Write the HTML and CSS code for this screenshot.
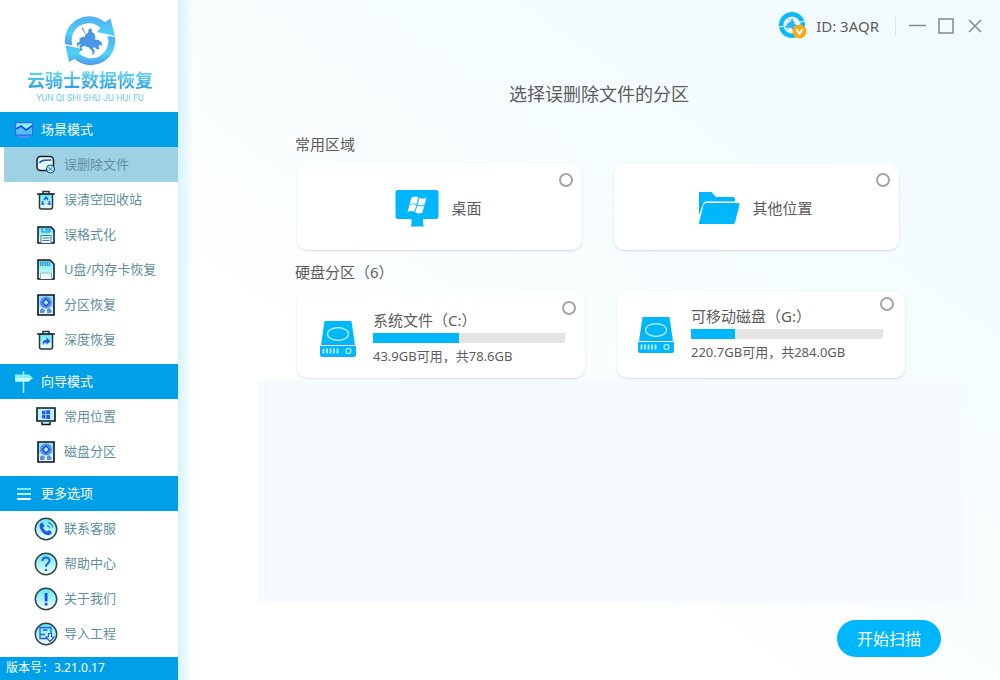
FILE: index.html
```html
<!DOCTYPE html>
<html lang="zh-CN">
<head>
<meta charset="utf-8">
<title>云骑士数据恢复</title>
<link rel="stylesheet" href="styles.css">
</head>
<body>
<svg class="defs" width="0" height="0" aria-hidden="true">
  <defs>
    <linearGradient id="aqua" x1="0" y1="0" x2="0" y2="1"><stop offset="0" stop-color="#5ee9ee"/><stop offset="1" stop-color="#f4feff"/></linearGradient>
    <linearGradient id="ring" x1="0" y1="0" x2="0" y2="1"><stop offset="0" stop-color="#54aef0"/><stop offset=".6" stop-color="#4ed0f3"/><stop offset="1" stop-color="#5098ee"/></linearGradient>
    <symbol id="platter" viewBox="0 0 18 22">
      <path d="M1 1h16v20H1z" fill="#8be6f3" stroke="#10131c" stroke-width="1.6"/>
      <path d="M2 13h14v7H2z" fill="#d6f6fb"/>
      <circle cx="9" cy="8.500" r="6" fill="#5a8fe6"/>
      <path d="M9 5l3.500 3.500L9 12 5.500 8.500z" fill="#9ff1f7" stroke="#1f46d8" stroke-width="1.300"/>
      <path d="M3 19v-3l2-2 3 2-1 3zM10 19v-4l3-1 2 4-2 1z" fill="#5f8be0"/>
    </symbol>
    <symbol id="drive" viewBox="0 0 38 38">
      <path d="M5.500 1h27l3.500 24H2z" fill="#00b7fd"/>
      <path d="M1 26h36v9q0 2-2 2H3q-2 0-2-2z" fill="#00b7fd"/>
      <ellipse cx="19" cy="14" rx="10.500" ry="6.300" fill="none" stroke="#c9f2fc" stroke-width="1.200"/>
      <path d="M4.500 28.500v5M8 28.500v5M11.500 28.500v5M15 28.500v5M18.500 28.500v5" stroke="#b6edfd" stroke-width="1.800"/>
      <circle cx="29.500" cy="31" r="2.500" fill="none" stroke="#c9f2fc" stroke-width="1.200"/>
    </symbol>
    <symbol id="rider" viewBox="0 0 26 28">
      <path d="M4.500 1l1.300-.6 3.200 6.800 2.300-1.700.2-3 1.800-1.300 1.700 1.300-.3 2.300 2.300 1.700 1.500 3.500-.8 2.500 4 .5 3.300 3-.5 3.500-1.500-2-1.500 1.800 1 2.700-2.500.5-1.500-2-3 .3 2.500 3.200-1.500 3.500h-1.300l.3-3.200-4-4-4.200-1.200-3 1.200 1.200 3-1.500.6-1.700-4.300 2.200-2.300-3 .5-.8 2.200-2-.6.7-3 3.200-1.600-.2-2.500 2.500-2.300 3-.3.5-2.500z"/>
    </symbol>
  </defs>
</svg>
<div class="app">
  <aside class="sidebar">
    <div class="brand">
      <svg class="brand-mark" width="52" height="50" viewBox="0 0 52 50" aria-hidden="true">
        <path d="M1 28A24.500 24.500 0 0 1 41 6l5.500-3.500L51 20 33 16l3.500-4A17 17 0 0 0 8.500 29.500z" fill="url(#ring)"/>
        <path d="M51 21A24.500 24.500 0 0 1 10.500 43L5 46 1.500 29.500 18.500 33l-3.500 4A17 17 0 0 0 43.500 20z" fill="url(#ring)"/>
        <use href="#rider" x="13" y="11" width="26" height="28" fill="#4897e5"/>
      </svg>
      <div class="brand-name">云骑士数据恢复</div>
      <div class="brand-latin">YUN QI SHI SHU JU HUI FU</div>
    </div>
    <nav class="menu">
      <section class="group">
        <h2 class="group-title">
          <svg width="20" height="18" viewBox="0 0 20 18" aria-hidden="true"><path d="M1.500 1.500h17v12.500h-17z" fill="#8eeef5" stroke="#2f70e8" stroke-width="1.500"/><path d="M2 8l5-3 5 4 6-4v8H2z" fill="#55bdf3"/><path d="M2 8l5-3 5 4 6-4" fill="none" stroke="#1552cc" stroke-width="1.700"/><path d="M5 16h10" stroke="#5d8cf2" stroke-width="2"/></svg>
          <span>场景模式</span>
        </h2>
        <a class="item active" href="#deleted"><span class="icon"><svg width="20" height="19" viewBox="0 0 20 19" aria-hidden="true"><rect x="1" y="1.500" width="16.500" height="14" rx="3.500" fill="#e3fbfd" stroke="#151b22" stroke-width="1.500"/><path d="M3.500 8c2-3 5-3 12-3" fill="none" stroke="#1f55cf" stroke-width="1.700"/><circle cx="14.500" cy="14" r="4" fill="#a8f1f8" stroke="#173d63"/><path d="M12.800 12.300l3.400 3.400m0-3.400l-3.400 3.400" stroke="#2a62d8"/></svg></span><span>误删除文件</span></a>
        <a class="item" href="#recycle"><span class="icon"><svg width="18" height="20" viewBox="0 0 18 20" aria-hidden="true"><path d="M2.500 4h13v13q0 2-2 2h-9q-2 0-2-2z" fill="url(#aqua)" stroke="#28353d" stroke-width="1.500"/><path d="M0 4h18M6 3.500V1.500h6v2" fill="none" stroke="#28353d" stroke-width="1.500"/><path d="M7 10l2-3 2 3M12 11l1 3h-2.500M7.500 14H5l1-3" fill="none" stroke="#245bea" stroke-width="1.500"/></svg></span><span>误清空回收站</span></a>
        <a class="item" href="#format"><span class="icon"><svg width="18" height="18" viewBox="0 0 18 18" aria-hidden="true"><path d="M1 1h13l3 3v13H1z" fill="url(#aqua)" stroke="#101417" stroke-width="1.500"/><path d="M5 1v5h8V1M9 1v4M11 1v4" fill="none" stroke="#2e7bd1"/><path d="M4 17V9.500h10V17" fill="#e8fbfd" stroke="#3c7f91"/><path d="M5.500 12h7M5.500 14.500h7" stroke="#397dc4"/></svg></span><span>误格式化</span></a>
        <a class="item" href="#usb"><span class="icon"><svg width="18" height="21" viewBox="0 0 18 21" aria-hidden="true"><path d="M1 1h12l4 4v15H1z" fill="url(#aqua)" stroke="#101417" stroke-width="1.500"/><path d="M3.500 3h2v3.500h-2zM7 3h2v3.500H7zM10.500 3h2v3.500h-2z" fill="none" stroke="#388fd8"/><path d="M3.500 20v-6h11v6" fill="#f0fdfd" stroke="#86bdc4"/></svg></span><span>U盘/内存卡恢复</span></a>
        <a class="item" href="#partition"><span class="icon"><svg width="18" height="22" aria-hidden="true"><use href="#platter"/></svg></span><span>分区恢复</span></a>
        <a class="item" href="#deep"><span class="icon"><svg width="18" height="20" viewBox="0 0 18 20" aria-hidden="true"><path d="M2.500 4h13v13q0 2-2 2h-9q-2 0-2-2z" fill="url(#aqua)" stroke="#28353d" stroke-width="1.500"/><path d="M0 4h18M6 3.500V1.500h6v2" fill="none" stroke="#28353d" stroke-width="1.500"/><path d="M6 15c-1-4 1-5 3.500-5V7.500l4 3.700-4 3.300V12.500c-2 0-2.500.5-3.500 2.500z" fill="#2456ee"/></svg></span><span>深度恢复</span></a>
      </section>
      <section class="group">
        <h2 class="group-title">
          <svg width="20" height="22" viewBox="0 0 20 22" aria-hidden="true"><path d="M9.500 0v22" stroke="#a7f5f5" stroke-width="1.500"/><path d="M1 3.500h14l4 3.500-4 3.500H1z" fill="#86f0f2"/><path d="M1 7h17l-3 3.500H1z" fill="#c8fbfa"/></svg>
          <span>向导模式</span>
        </h2>
        <a class="item" href="#common"><span class="icon"><svg width="20" height="19" viewBox="0 0 20 19" aria-hidden="true"><path d="M1 1h18v13H1z" fill="#b8f4f8" stroke="#101723" stroke-width="1.600"/><path d="M6 4l3.500-.5v3.800H6zM10.300 3.400L14 3v4.300h-3.700zM6 8h3.500v3.700L6 11.200zM10.300 8H14v4.200l-3.700-.4z" fill="#2856ef"/><path d="M6 15v2.500h8V15" fill="#b8f4f8" stroke="#101723" stroke-width="1.500"/></svg></span><span>常用位置</span></a>
        <a class="item" href="#disk"><span class="icon"><svg width="18" height="22" aria-hidden="true"><use href="#platter"/></svg></span><span>磁盘分区</span></a>
      </section>
      <section class="group">
        <h2 class="group-title">
          <svg width="20" height="14" viewBox="0 0 20 14" aria-hidden="true"><path d="M3 2h14" stroke="#76e9fb" stroke-width="2"/><path d="M3 7h14" stroke="#b5f4fc" stroke-width="2"/><path d="M3 12h14" stroke="#e8fdff" stroke-width="2"/></svg>
          <span>更多选项</span>
        </h2>
        <a class="item" href="#support"><span class="icon"><svg width="24" height="24" viewBox="0 0 24 24" aria-hidden="true"><circle cx="12" cy="12" r="10.700" fill="url(#aqua)" stroke="#34434b" stroke-width="1.500"/><path d="M8 5.500l2.500 3-1.500 2c1 2 2 3 4 4l2-1.500 3 2.500c-1 2-2.500 3-5 2.500C9 17 6 13 5.500 9c0-2 1-3 2.500-3.500z" fill="#2458e6"/><path d="M13 8.500q2.500.5 3 3M14 5.500q4 1 4.800 5" fill="none" stroke="#3f8ed6" stroke-width="1.300"/></svg></span><span>联系客服</span></a>
        <a class="item" href="#help"><span class="icon"><svg width="24" height="24" viewBox="0 0 24 24" aria-hidden="true"><circle cx="12" cy="12" r="10.700" fill="url(#aqua)" stroke="#34434b" stroke-width="1.500"/><path d="M8.500 9c0-4.500 7-4.500 7-.5 0 2.800-3.500 2.800-3.500 6.200" fill="none" stroke="#2458e6" stroke-width="1.900"/><path d="M11 17h2v2h-2z" fill="#2458e6"/></svg></span><span>帮助中心</span></a>
        <a class="item" href="#about"><span class="icon"><svg width="24" height="24" viewBox="0 0 24 24" aria-hidden="true"><circle cx="12" cy="12" r="10.700" fill="url(#aqua)" stroke="#34434b" stroke-width="1.500"/><path d="M10.700 6h2.800v8.500h-2.800zM10.700 16h2.800v2.500h-2.800z" fill="#1c4aec"/></svg></span><span>关于我们</span></a>
        <a class="item" href="#import"><span class="icon"><svg width="24" height="24" viewBox="0 0 24 24" aria-hidden="true"><circle cx="12" cy="12" r="10.700" fill="url(#aqua)" stroke="#34434b" stroke-width="1.500"/><path d="M13 16.500H6v-11h11V11M9 8h4.500M6 12.500h5" fill="none" stroke="#275de4" stroke-width="1.300"/><path d="M14.500 11.500h3v3.500H20l-4 4.500-4-4.500h2.500z" fill="#e8fdfd" stroke="#275de4" stroke-width="1.200"/></svg></span><span>导入工程</span></a>
      </section>
    </nav>
    <footer class="version">版本号：3.21.0.17</footer>
  </aside>

  <main class="main">
    <header class="topbar">
      <div class="account">
        <svg width="30" height="30" viewBox="0 0 30 30" aria-hidden="true"><circle cx="14" cy="14" r="10.800" fill="#ecfbff" stroke="#0cb9f7" stroke-width="4.500"/><path d="M1 16l9-1M18 12l9-2" stroke="#eefcff" stroke-width="1.200"/><use href="#rider" x="7" y="7" width="14" height="14" fill="#2cb5f0"/><circle cx="21.500" cy="20.500" r="7" fill="#f9aa18"/><path d="M18.500 18l3 5 3-5" fill="none" stroke="#fff" stroke-width="1.900"/></svg>
        <span>ID: 3AQR</span>
      </div>
      <div class="window-buttons">
        <button type="button" aria-label="最小化"><svg width="18" height="18" viewBox="0 0 18 18"><path d="M1 8.500h17"/></svg></button>
        <button type="button" aria-label="最大化"><svg width="18" height="18" viewBox="0 0 18 18"><path d="M2 2h14v14H2z"/></svg></button>
        <button type="button" aria-label="关闭"><svg width="18" height="18" viewBox="0 0 18 18"><path d="M3 3l12 12M15 3L3 15"/></svg></button>
      </div>
    </header>

    <div class="content">
      <h1 class="title">选择误删除文件的分区</h1>
      <h2 class="label">常用区域</h2>
      <div class="places">
        <label class="card place">
          <svg width="44" height="38" viewBox="0 0 44 38" aria-hidden="true"><path d="M3 1h38q2.500 0 2.500 2.500V27q0 3-2.500 3H28v5.500l1 2H15.500l1-2V30H3q-2.500 0-2.500-3V3.500Q.5 1 3 1z" fill="#00b7fd"/><path d="M16.500 8.500q4-2 7-.2l-2 7q-3.500-1.500-7 .3zM24.500 9q3.500 1.500 7-.2l-2 7q-3.500 1.500-7 0zM14.300 16.200q3.500-1.800 7 0l-1.800 6.600q-3.500-1.600-7 .2zM22.300 16.800q3.500 1.500 7 0l-2 6.900q-3.500 1.500-7-.2z" fill="#fff"/></svg>
          <span>桌面</span>
          <input class="pick" type="radio" name="target">
        </label>
        <label class="card place">
          <svg width="42" height="34" viewBox="0 0 42 34" aria-hidden="true"><path d="M1 1h12.500l4.500 5H35q2 0 2 2v2.500H8q-2 0-2.700 2L1 24z" fill="#00b7fd"/><path d="M8 12h32q2 0 1.500 2L37 31.500q-.5 1.500-2 1.500H2q-1.500 0-1-1.500L5.500 14Q6 12 8 12z" fill="#00b7fd"/></svg>
          <span>其他位置</span>
          <input class="pick" type="radio" name="target">
        </label>
      </div>
      <h2 class="label">硬盘分区（6）</h2>
      <div class="disks">
        <label class="card disk">
          <svg width="38" height="38" aria-hidden="true"><use href="#drive"/></svg>
          <span class="disk-info">
            <span class="disk-name">系统文件（C:）</span>
            <span class="bar"><span class="fill" style="width:45%"></span></span>
            <span class="disk-size">43.9GB可用，共78.6GB</span>
          </span>
          <input class="pick" type="radio" name="target">
        </label>
        <label class="card disk raised">
          <svg width="38" height="38" aria-hidden="true"><use href="#drive"/></svg>
          <span class="disk-info">
            <span class="disk-name">可移动磁盘（G:）</span>
            <span class="bar"><span class="fill" style="width:23%"></span></span>
            <span class="disk-size">220.7GB可用，共284.0GB</span>
          </span>
          <input class="pick" type="radio" name="target">
        </label>
      </div>
    </div>
    <div class="panel"></div>
    <div class="actions"><button class="scan" type="button">开始扫描</button></div>
  </main>
</div>
</body>
</html>
```

FILE: styles.css
```css
* {
  box-sizing: border-box;
}

body {
  margin: 0;
  font-family: "Noto Sans", "Noto Sans CJK SC", sans-serif;
  font-size: 13px;
  font-weight: 400;
  color: #5c5c5c;
}

svg {
  display: block;
  flex: none;
}

h1,
h2 {
  margin: 0;
  font-weight: 400;
}

button {
  font: inherit;
  border: 0;
  background: none;
  padding: 0;
  cursor: pointer;
}

.defs {
  position: absolute;
}

.app {
  display: flex;
  min-height: 100vh;
}

/* Sidebar */
.sidebar {
  width: 178px;
  flex: none;
  display: flex;
  flex-direction: column;
  background: #fff;
}

.brand {
  height: 112px;
  padding: 16px 0 0 2px;
  display: flex;
  flex-direction: column;
  align-items: center;
}

.brand-name {
  font-size: 18px;
  line-height: 28px;
  font-weight: 700;
  color: transparent;
  background: linear-gradient(#5fd4f2 25%, #2a9ae6 85%);
  background-clip: text;
  -webkit-background-clip: text;
}

.brand-latin {
  font-family: Roboto, sans-serif;
  font-size: 9px;
  line-height: 8px;
  color: #6fccf0;
}

.menu {
  flex: 1;
}

.group {
  padding-bottom: 7px;
}

.group:last-child {
  padding-bottom: 6px;
}

.group-title {
  display: flex;
  align-items: center;
  gap: 7px;
  height: 35px;
  padding-left: 14px;
  background: #00a0e9;
  color: #fff;
  font-size: 13px;
}

.item {
  display: flex;
  align-items: center;
  gap: 6px;
  height: 35px;
  padding-left: 30px;
  margin-left: 4px;
  color: #61909d;
  text-decoration: none;
}

.item > span:last-child,
.group-title > span {
  padding-bottom: 2px;
}

.item.active {
  background: #9dd1e3;
}

.icon {
  width: 24px;
  display: flex;
  justify-content: center;
}

.version {
  height: 23px;
  line-height: 22px;
  padding-left: 6px;
  background: #00a0e9;
  color: #fff;
  font-size: 12px;
}

/* Main area */
.main {
  flex: 1;
  min-width: 0;
  display: flex;
  flex-direction: column;
  background:
    linear-gradient(to right, #d9f3fc, rgba(255, 255, 255, 0) 16px),
    linear-gradient(35deg, #fff 30%, #f8fdfe 55%, #effbfd 100%);
}

.topbar {
  display: flex;
  justify-content: flex-end;
  align-items: center;
  height: 52px;
  padding-right: 16px;
}

.account {
  display: flex;
  align-items: center;
  gap: 8px;
  padding-right: 16px;
  font-size: 15px;
  line-height: 20px;
}

.window-buttons {
  display: flex;
  gap: 11px;
  padding-left: 12px;
  border-left: 1px solid #dbe3e5;
}

.window-buttons path {
  fill: none;
  stroke: #7e8b91;
  stroke-width: 1.5;
}

.content {
  padding: 0 95px 0 117px;
}

.title {
  padding: 29px 2px 24px 0;
  font-size: 18px;
  line-height: 27px;
  text-align: center;
}

.label {
  font-size: 15px;
  line-height: 24px;
  margin-bottom: 8px;
}

.places,
.disks {
  display: grid;
  grid-template-columns: 1fr 1fr;
  gap: 32px;
  margin-left: 2px;
}

.places {
  margin-right: 6px;
  margin-bottom: 10px;
}

.card {
  position: relative;
  display: flex;
  align-items: center;
  height: 86px;
  border-radius: 10px;
  background: #fff;
  box-shadow: 0 1px 2px rgba(60, 90, 100, 0.2);
  cursor: pointer;
}

.place {
  justify-content: center;
  gap: 12px;
  font-size: 15px;
  padding: 1px 2px 0 0;
}

.pick {
  appearance: none;
  position: absolute;
  top: 9px;
  right: 9px;
  width: 14px;
  height: 14px;
  margin: 0;
  border: 2px solid #a5a5a5;
  border-radius: 50%;
  background: #fff;
}

.pick:checked {
  background: #00b7fd;
}

.disk {
  gap: 16px;
  padding: 8px 20px 0 22px;
}

.disk.raised {
  padding: 0 22px 0 20px;
}

.raised .pick {
  top: 5px;
  right: 11px;
}

.disk-info {
  flex: 1;
  display: flex;
  flex-direction: column;
}

.disk-name {
  padding-bottom: 2px;
  font-size: 15px;
  line-height: 22px;
}

.bar {
  height: 10px;
  background: #e4e4e4;
}

.fill {
  display: block;
  height: 100%;
  background: #00b7fd;
}

.disk-size {
  padding: 2px 0;
  line-height: 22px;
}

.panel {
  flex: 1;
  min-height: 120px;
  margin: 2px 35px 0 80px;
  background: #f5fbfe;
}

.actions {
  display: flex;
  justify-content: flex-end;
  padding: 17px 59px 23px 0;
}

.scan {
  height: 37px;
  padding: 0 20px 2px;
  border-radius: 19px;
  background: #00b7fd;
  color: #fff;
  font-size: 16px;
}
```
